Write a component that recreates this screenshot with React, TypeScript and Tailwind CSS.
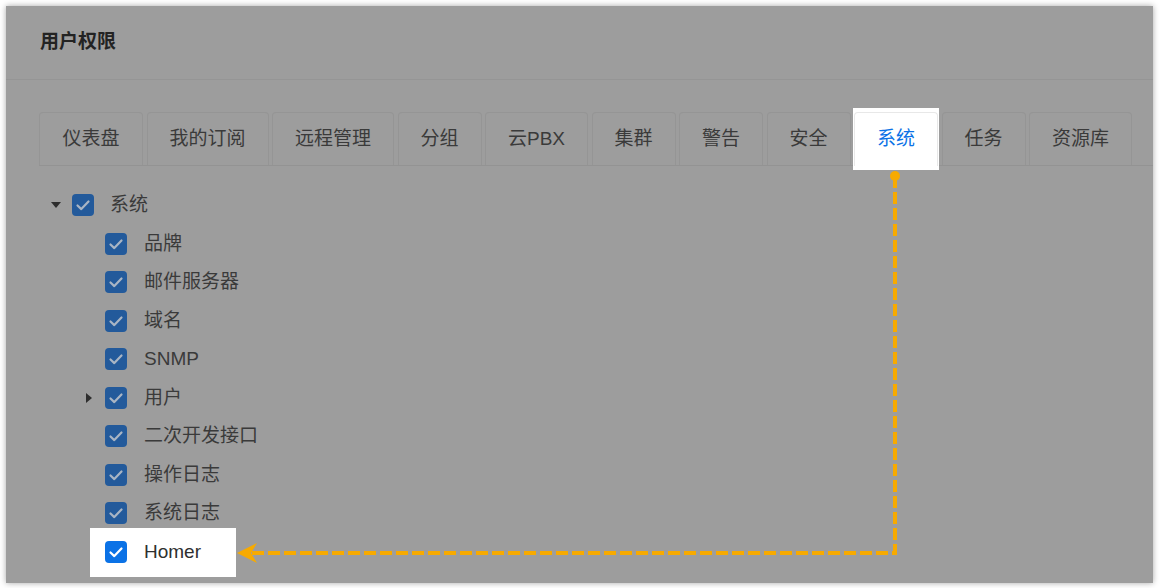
import React from 'react';

const font = { fontFamily: '"Liberation Sans", "Noto Sans CJK SC", sans-serif' };

const tabs = [
  { label: '仪表盘', w: 'w-[104px]' },
  { label: '我的订阅', w: 'w-[122px]' },
  { label: '远程管理', w: 'w-[122px]' },
  { label: '分组', w: 'w-[84px]' },
  { label: '云PBX', w: 'w-[103px]' },
  { label: '集群', w: 'w-[84px]' },
  { label: '警告', w: 'w-[84px]' },
  { label: '安全', w: 'w-[84px]' },
  { label: '系统', w: 'w-[84px]', active: true },
  { label: '任务', w: 'w-[84px]' },
  { label: '资源库', w: 'w-[103px]' },
];

const children = [
  { label: '品牌' },
  { label: '邮件服务器' },
  { label: '域名' },
  { label: 'SNMP' },
  { label: '用户', caret: true },
  { label: '二次开发接口' },
  { label: '操作日志' },
  { label: '系统日志' },
];

// 勾选框
const CheckBox = ({ bright = false }: { bright?: boolean }) => (
  <span
    className={`flex h-[22px] w-[22px] shrink-0 items-center justify-center rounded-[4px] ${
      bright ? 'bg-[#0b72e6]' : 'bg-[#235a9b]'
    }`}
  >
    <svg width="22" height="22" viewBox="0 0 22 22" fill="none">
      <path
        d="M5.5 11.5l3.8 3.6 7.2-7.6"
        stroke={bright ? '#ffffff' : '#a9b5c4'}
        strokeWidth="2.2"
        strokeLinecap="round"
        strokeLinejoin="round"
      />
    </svg>
  </span>
);

const CaretDown = () => (
  <svg width="10" height="6" viewBox="0 0 10 6">
    <path d="M0 0h10L5 6z" fill="#2e2e2e" />
  </svg>
);

const CaretRight = () => (
  <svg width="6" height="10" viewBox="0 0 6 10">
    <path d="M0 0v10l6-5z" fill="#2e2e2e" />
  </svg>
);

export default function App() {
  return (
    <div className="h-[588px] w-[1160px] bg-white p-[6px]" style={font}>
      <div className="relative h-[577px] w-[1147px] bg-[#9d9d9d] shadow-[0_0_6px_rgba(0,0,0,0.35)]">
        {/* 标题 */}
        <div className="flex h-[74px] items-center border-b border-[#959595] px-[34px]">
          <h1 className="text-[19px] font-bold text-[#232323]">用户权限</h1>
        </div>

        {/* 标签页 */}
        <div className="ml-[33px] mt-[32px] flex gap-[3.5px] border-b border-[#939393]">
          {tabs.map((t) =>
            t.active ? (
              <div key={t.label} className={`relative ${t.w} h-[53px] shrink-0`}>
                <span className="absolute -bottom-[5px] -left-[1px] -right-[1px] -top-[4px] bg-white" />
                <div className="relative flex h-[54px] items-center justify-center rounded-t-[4px] border border-b-0 border-[#e8e8e8] bg-white text-[19px] text-[#0b72e6]">
                  {t.label}
                </div>
              </div>
            ) : (
              <div
                key={t.label}
                className={`${t.w} flex h-[53px] shrink-0 items-center justify-center rounded-t-[4px] border border-b-0 border-[#959595] text-[19px] text-[#3a3a3a]`}
              >
                {t.label}
              </div>
            )
          )}
        </div>

        {/* 权限树 */}
        <div className="ml-[33px] mt-[20px] text-[19px] text-[#3a3a3a]">
          <div className="ml-[7px] flex h-[38.5px] items-center gap-[6px]">
            <span className="flex w-[20px] justify-center">
              <CaretDown />
            </span>
            <CheckBox />
            <span className="ml-[10px]">系统</span>
          </div>
          {children.map((c) => (
            <div key={c.label} className="ml-[40px] flex h-[38.5px] items-center gap-[6px]">
              <span className="flex w-[20px] justify-center">{c.caret && <CaretRight />}</span>
              <CheckBox />
              <span className="ml-[11px]">{c.label}</span>
            </div>
          ))}
          <div className="ml-[40px] flex h-[38.5px] items-center gap-[6px]">
            <span className="w-[20px]" />
            <div className="relative flex items-center">
              <span className="absolute -bottom-[11px] -left-[15px] -right-[35px] -top-[10px] bg-white" />
              <span className="relative">
                <CheckBox bright />
              </span>
              <span className="relative ml-[17px] text-[#2f2f2f]">Homer</span>
            </div>
          </div>
        </div>

        {/* 标注箭头 */}
        <svg
          className="pointer-events-none absolute left-0 top-0"
          width="1147"
          height="577"
          viewBox="6 6 1147 577"
        >
          <circle cx="895" cy="176" r="5" fill="#f7aa00" />
          <path
            d="M895 176V553H252"
            fill="none"
            stroke="#f7aa00"
            strokeWidth="4"
            strokeDasharray="12 4"
          />
          <path d="M237 553L257 543L251 553L257 563Z" fill="#f7aa00" />
        </svg>
      </div>
    </div>
  );
}
